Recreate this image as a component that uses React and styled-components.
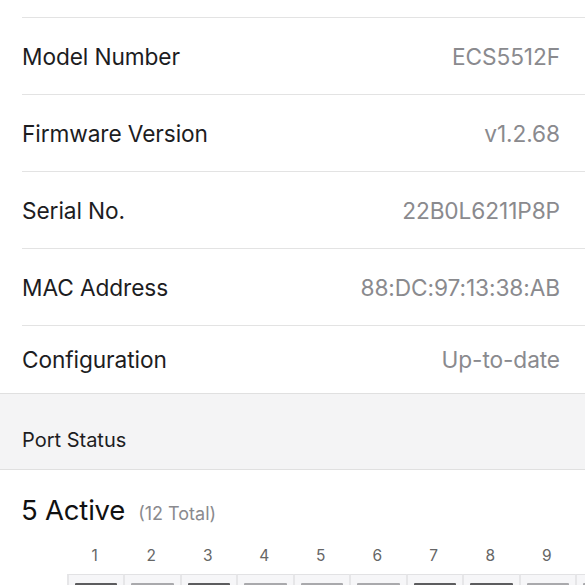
import React from "react";
import styled, { createGlobalStyle } from "styled-components";

const Global = createGlobalStyle`
  html, body { margin: 0; padding: 0; background: #ffffff; }
  body { font-family: Inter, "Liberation Sans", Arial, sans-serif; overflow: hidden; }
  * { box-sizing: border-box; }
`;

const Page = styled.div`
  width: 585px;
  height: 585px;
  overflow: hidden;
  background: #fff;
  display: flex;
  flex-direction: column;
  & > * { flex-shrink: 0; }
`;

const List = styled.div`
  display: flex;
  flex-direction: column;
`;

const TopStub = styled.div`
  height: 18px;
  margin-left: 22px;
  border-bottom: 1px solid #e3e3e3;
`;

const Row = styled.div`
  height: ${(p) => (p.$last ? 67 : 77)}px;
  margin-left: 22px;
  padding-right: 25px;
  display: flex;
  align-items: center;
  justify-content: space-between;
  border-bottom: ${(p) => (p.$last ? "none" : "1px solid #e3e3e3")};
  font-size: 22.7px;
  letter-spacing: -0.1px;
`;

const Label = styled.span`
  color: #1d1d1f;
`;

const Value = styled.span`
  color: #8a8a8e;
`;

const SectionHeader = styled.div`
  height: 77px;
  background: #f4f4f5;
  border-top: 1px solid #e0e0e0;
  border-bottom: 1px solid #e0e0e0;
  display: flex;
  align-items: flex-end;
  padding: 0 0 17px 22px;
  font-size: 20px;
  color: #1d1d1f;
`;

const Summary = styled.div`
  display: flex;
  align-items: baseline;
  gap: 13px;
  padding: 23px 0 0 21px;
  height: 66px;
`;

const ActiveCount = styled.span`
  font-size: 27.5px;
  color: #111;
  letter-spacing: -0.2px;
`;

const Total = styled.span`
  font-size: 18px;
  color: #8a8a8e;
`;

const Ports = styled.div`
  display: grid;
  grid-template-columns: repeat(10, 56.5px);
  margin-left: 66.5px;
`;

const PortNum = styled.div`
  height: 38px;
  display: flex;
  align-items: center;
  justify-content: center;
  font-size: 15.5px;
  color: #666;
`;

const PortCell = styled.div`
  height: 40px;
  background: #f6f6f8;
  border-top: 1px solid #e2e2e4;
  border-left: 2px solid #e6e6e8;
  display: flex;
  justify-content: center;
  padding: 8px 6px 0 6px;
`;

const PortLed = styled.div`
  width: 100%;
  height: 6px;
  background: ${(p) => (p.$active ? "#5c5c5e" : "#a9a9ac")};
  border-radius: 1px;
`;

const rows = [
  ["Model Number", "ECS5512F"],
  ["Firmware Version", "v1.2.68"],
  ["Serial No.", "22B0L6211P8P"],
  ["MAC Address", "88:DC:97:13:38:AB"],
  ["Configuration", "Up-to-date"],
];

const active = [1, 3, 7, 8];
const ports = Array.from({ length: 10 }, (_, i) => i + 1);

export default function App() {
  return (
    <Page>
      <Global />
      <List>
        <TopStub />
        {rows.map(([l, v], i) => (
          <Row key={l} $last={i === rows.length - 1}>
            <Label>{l}</Label>
            <Value>{v}</Value>
          </Row>
        ))}
      </List>
      <SectionHeader>Port Status</SectionHeader>
      <Summary>
        <ActiveCount>5 Active</ActiveCount>
        <Total>(12 Total)</Total>
      </Summary>
      <Ports>
        {ports.map((n) => (
          <PortNum key={"n" + n}>{n <= 9 ? n : ""}</PortNum>
        ))}
        {ports.map((n) => (
          <PortCell key={"c" + n}>
            <PortLed $active={active.includes(n)} />
          </PortCell>
        ))}
      </Ports>
    </Page>
  );
}
